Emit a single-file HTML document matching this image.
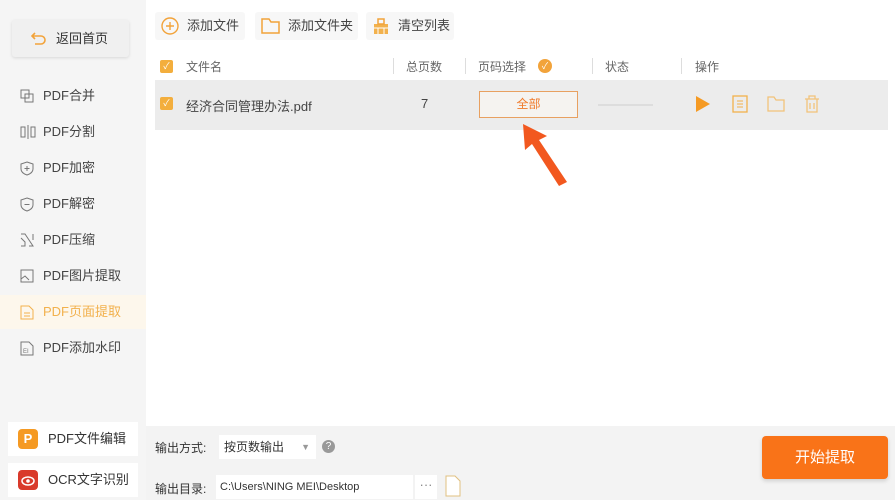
<!DOCTYPE html>
<html><head><meta charset="utf-8"><style>
*{margin:0;padding:0;box-sizing:border-box}
body{width:895px;height:500px;overflow:hidden;background:#fff;font-family:"Liberation Sans","Noto Sans CJK SC",sans-serif;font-size:13px;color:#444;position:relative}
.abs{position:absolute}
#side{left:0;top:0;width:146px;height:500px;background:#f5f5f5}
.back{left:12px;top:20px;width:117px;height:37px;background:#f0f0f0;border-radius:3px;box-shadow:0 1px 3px rgba(0,0,0,.12);font-size:13px;line-height:37px;padding-left:44px;color:#333}
.item{left:0;width:146px;height:34px;line-height:34px;padding-left:43px;font-size:13px;color:#444}
.item svg{position:absolute;left:20px;top:10px}
.act{background:#fdf7ec;color:#f2b14d}
.bot{left:8px;width:130px;height:34px;background:#fff;line-height:34px;padding-left:40px;font-size:13px;color:#333}
.bot .ic{position:absolute;left:10px;top:7px;width:20px;height:20px;border-radius:4px}
.tb{top:12px;height:28px;line-height:28px;font-size:13px;color:#444;background:#f7f7f7;border-radius:3px}
.hdr{top:58px;font-size:12px;color:#666}
.sep{top:58px;width:1px;height:16px;background:#ddd}
#row{left:155px;top:80px;width:733px;height:50px;background:#ececec}
.cb{width:13px;height:13px;background:#f3ae3d;border-radius:2px;color:#fff;font-size:9px;line-height:13px;text-align:center}
#bar{left:146px;top:426px;width:749px;height:74px;background:#f3f3f3}
</style></head><body>
<div id="side" class="abs"></div>
<div class="abs back"><svg class="abs" style="left:18px;top:10px" width="18" height="18" viewBox="0 0 18 18"><path d="M5 3 L2 6 L5 9 M2 6 H11 a4 4 0 0 1 0 8 H5" fill="none" stroke="#f2a33a" stroke-width="1.6"/></svg>返回首页</div>
<div class="abs item" style="top:79px"><svg width="14" height="14"><rect x="1" y="1" width="8" height="8" fill="none" stroke="#777"/><rect x="5" y="5" width="8" height="8" fill="none" stroke="#777"/></svg>PDF合并</div>
<div class="abs item" style="top:115px"><svg width="16" height="14"><rect x="1" y="2" width="4" height="10" fill="none" stroke="#777"/><line x1="8" y1="0" x2="8" y2="14" stroke="#777"/><rect x="11" y="2" width="4" height="10" fill="none" stroke="#777"/></svg>PDF分割</div>
<div class="abs item" style="top:151px"><svg width="14" height="15"><path d="M7 1 L13 3 V8 Q13 12 7 14 Q1 12 1 8 V3Z" fill="none" stroke="#777"/><path d="M7 5V10M4.5 7.5H9.5" stroke="#777"/></svg>PDF加密</div>
<div class="abs item" style="top:187px"><svg width="14" height="15"><path d="M7 1 L13 3 V8 Q13 12 7 14 Q1 12 1 8 V3Z" fill="none" stroke="#777"/><path d="M4.5 7.5H9.5" stroke="#777"/></svg>PDF解密</div>
<div class="abs item" style="top:223px"><svg width="14" height="14"><path d="M1 1H5L9 7 L13 13H9M1 5 L5 9 V13H1M13 1V7" fill="none" stroke="#777"/></svg>PDF压缩</div>
<div class="abs item" style="top:259px"><svg width="14" height="14"><rect x="1" y="1" width="12" height="12" fill="none" stroke="#777"/><path d="M1 10 L5 7 L9 11" fill="none" stroke="#777"/></svg>PDF图片提取</div>
<div class="abs item act" style="top:295px"><svg width="14" height="15"><path d="M1 1H9L13 5V14H1Z" fill="none" stroke="#f2b14d"/><path d="M4 8H10M4 11H10" stroke="#f2b14d"/></svg>PDF页面提取</div>
<div class="abs item" style="top:331px"><svg width="14" height="15"><path d="M1 1H9L13 5V14H1Z" fill="none" stroke="#777"/><text x="3" y="12" font-size="6" fill="#777">EI</text></svg>PDF添加水印</div>
<div class="abs bot" style="top:422px"><div class="ic" style="background:#f59a23;color:#fff;font-weight:bold;text-align:center;line-height:20px;font-size:13px">P</div>PDF文件编辑</div>
<div class="abs bot" style="top:463px"><div class="ic" style="background:#d93a2b"><svg width="20" height="20"><ellipse cx="10" cy="10" rx="6" ry="4" fill="none" stroke="#fff" stroke-width="1.5"/><circle cx="10" cy="10" r="1.8" fill="#fff"/></svg></div>OCR文字识别</div>

<div class="abs tb" style="left:155px;width:90px;padding-left:32px"><svg class="abs" style="left:6px;top:5px" width="18" height="18"><circle cx="9" cy="9" r="8" fill="none" stroke="#f2a33a" stroke-width="1.4"/><path d="M9 5V13M5 9H13" stroke="#f2a33a" stroke-width="1.4"/></svg>添加文件</div>
<div class="abs tb" style="left:255px;width:103px;padding-left:33px"><svg class="abs" style="left:6px;top:5px" width="20" height="18"><path d="M1 2H8L10 5H18V16H1Z" fill="none" stroke="#f2a33a" stroke-width="1.5"/></svg>添加文件夹</div>
<div class="abs tb" style="left:366px;width:88px;padding-left:32px"><svg class="abs" style="left:6px;top:5px" width="18" height="18"><rect x="2" y="7" width="14" height="10" fill="#f2b14d"/><rect x="6" y="2" width="6" height="5" fill="none" stroke="#f2a33a" stroke-width="1.5"/><path d="M2 11H16M6 11V17M12 11V17" stroke="#fff"/></svg>清空列表</div>

<div class="abs cb" style="left:160px;top:60px">✓</div>
<div class="abs hdr" style="left:186px">文件名</div>
<div class="abs sep" style="left:393px"></div>
<div class="abs hdr" style="left:406px">总页数</div>
<div class="abs sep" style="left:465px"></div>
<div class="abs hdr" style="left:478px">页码选择</div>
<div class="abs" style="left:538px;top:59px;width:14px;height:14px;border-radius:7px;background:#f2a33a;color:#fff;font-size:9px;text-align:center;line-height:14px">✓</div>
<div class="abs sep" style="left:592px"></div>
<div class="abs hdr" style="left:605px">状态</div>
<div class="abs sep" style="left:681px"></div>
<div class="abs hdr" style="left:695px">操作</div>

<div id="row" class="abs"></div>
<div class="abs cb" style="left:160px;top:97px">✓</div>
<div class="abs" style="left:186px;top:96px;color:#444">经济合同管理办法.pdf</div>
<div class="abs" style="left:421px;top:96px">7</div>
<div class="abs" style="left:479px;top:91px;width:99px;height:27px;border:1px solid #e8a060;background:#f5f3f0;color:#f07a2a;text-align:center;line-height:25px;font-size:12px">全部</div>
<div class="abs" style="left:598px;top:104px;width:55px;height:2px;background:#ddd"></div>
<svg class="abs" style="left:695px;top:95px" width="16" height="18"><path d="M1 1L15 9L1 17Z" fill="#f59a23"/></svg>
<svg class="abs" style="left:732px;top:95px" width="16" height="18"><rect x="1" y="1" width="14" height="16" fill="none" stroke="#f2b14d" stroke-width="1.3"/><path d="M5 6H11M5 9H11M5 12H11" stroke="#f2b14d"/></svg>
<svg class="abs" style="left:767px;top:96px" width="18" height="16"><path d="M1 1H7L9 4H17V15H1Z" fill="none" stroke="#f2c37a" stroke-width="1.3"/></svg>
<svg class="abs" style="left:804px;top:95px" width="16" height="18"><path d="M1 4H15M5 4V1H11V4M3 4V17H13V4M6 8V14M10 8V14" fill="none" stroke="#f2c37a" stroke-width="1.3"/></svg>
<svg class="abs" style="left:515px;top:120px" width="60" height="70"><path d="M8 4 L32 16 L24 20 L52 62 L44 66 L17 24 L10 30 Z" fill="#f2581f"/></svg>

<div id="bar" class="abs"></div>
<div class="abs" style="left:155px;top:439px;font-size:12px;color:#333">输出方式:</div>
<div class="abs" style="left:219px;top:435px;width:97px;height:24px;background:#fff;font-size:12px;line-height:24px;padding-left:5px;color:#333">按页数输出<span style="position:absolute;right:6px;color:#999;font-size:9px">▼</span></div>
<div class="abs" style="left:322px;top:440px;width:13px;height:13px;border-radius:7px;background:#999;color:#fff;font-size:10px;text-align:center;line-height:13px">?</div>
<div class="abs" style="left:155px;top:480px;font-size:12px;color:#333">输出目录:</div>
<div class="abs" style="left:216px;top:475px;width:197px;height:24px;background:#fff;font-size:11px;line-height:24px;padding-left:4px;color:#333">C:\Users\NING MEI\Desktop</div>
<div class="abs" style="left:415px;top:475px;width:22px;height:24px;background:#fff;color:#888;text-align:center;line-height:20px">···</div>
<svg class="abs" style="left:445px;top:475px" width="16" height="22"><path d="M1 1H10L15 6V21H1Z" fill="#fff" stroke="#e0c080"/></svg>
<div class="abs" style="left:762px;top:436px;width:126px;height:43px;background:#f97318;border-radius:4px;color:#fff;font-size:15px;text-align:center;line-height:43px;box-shadow:0 2px 4px rgba(0,0,0,.15)">开始提取</div>
</body></html>
